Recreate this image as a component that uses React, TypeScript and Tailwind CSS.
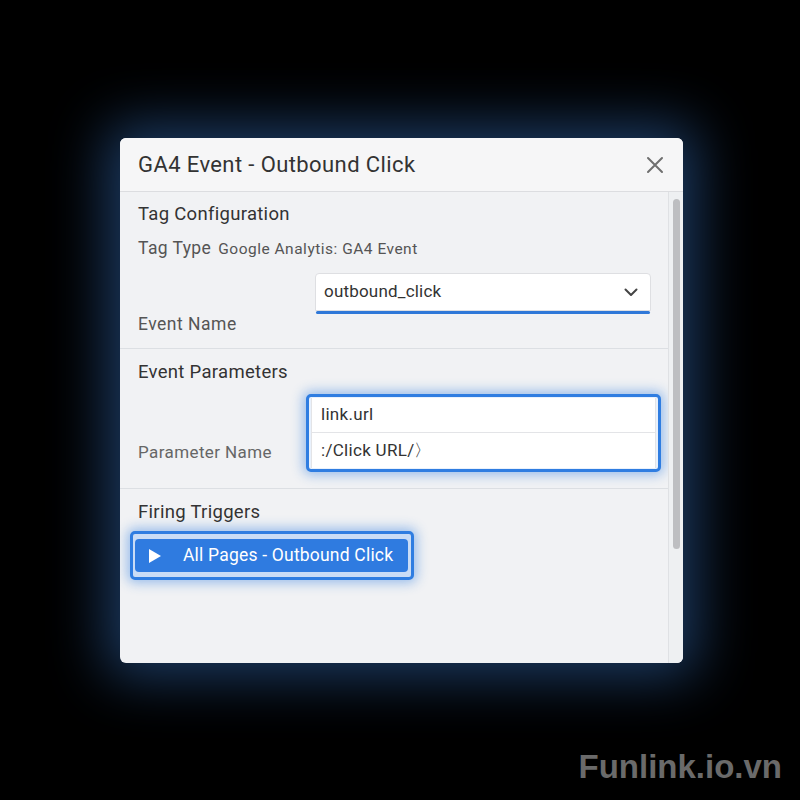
import React from "react";

const font = { fontFamily: "Roboto, 'Noto Sans', Arial, sans-serif" };

function CloseIcon() {
  return (
    <svg width="18" height="18" viewBox="0 0 18 18" fill="none">
      <path d="M2 2L16 16M16 2L2 16" stroke="#6f6f6f" strokeWidth="2" strokeLinecap="round" />
    </svg>
  );
}

function Chevron() {
  return (
    <svg width="14" height="9" viewBox="0 0 14 9" fill="none">
      <path d="M1.5 1.5L7 7L12.5 1.5" stroke="#444" strokeWidth="2" strokeLinecap="round" strokeLinejoin="round" />
    </svg>
  );
}

function Play() {
  return (
    <svg width="14" height="16" viewBox="0 0 14 16">
      <path d="M1 1L13 8L1 15Z" fill="#fff" />
    </svg>
  );
}

export default function App() {
  return (
    <div className="relative w-[800px] h-[800px] bg-black pt-[138px] pl-[120px]" style={font}>
      <div className="w-[563px] h-[525px] rounded-md overflow-hidden bg-[#f1f2f4] flex flex-col shadow-[0_0_55px_14px_rgba(45,95,160,0.62)]">
        {/* header */}
        <div className="h-[54px] shrink-0 bg-[#f6f6f7] border-b border-[#dcdde0] flex items-center justify-between pl-[18px] pr-[19px]">
          <span className="text-[22px] tracking-[0.4px] text-[#333]">GA4 Event - Outbound Click</span>
          <CloseIcon />
        </div>

        <div className="flex flex-1 min-h-0">
          <div className="flex-1 flex flex-col">
            {/* Tag Configuration */}
            <section className="pt-[11px] pb-[13px] border-b border-[#dcdfe3]">
              <h2 className="pl-[18px] text-[18.5px] tracking-[0.3px] leading-[22px] text-[#333]">Tag Configuration</h2>
              <div className="pl-[18px] mt-[12px] flex items-baseline gap-[7px] leading-[22px]">
                <span className="text-[17.5px] tracking-[0.4px] text-[#555]">Tag Type</span>
                <span className="text-[15.5px] tracking-[0.5px] text-[#555]">Google Analytis: GA4 Event</span>
              </div>
              <div className="ml-[195px] mr-[17px] mt-[13px]">
                <div className="h-[38px] bg-white border border-[#dedfe2] rounded-t-[4px] flex items-center justify-between pl-[8px] pr-[12px]">
                  <span className="text-[17px] tracking-[0.2px] text-[#333]">outbound_click</span>
                  <Chevron />
                </div>
                <div className="mx-px h-[3px] bg-[#2f78d8] rounded-sm" />
              </div>
              <div className="pl-[18px] mt-[-1px] text-[17.5px] tracking-[0.5px] leading-[22px] text-[#555]">Event Name</div>
            </section>

            {/* Event Parameters */}
            <section className="pt-[12px] pb-[16px] border-b border-[#dcdfe3]">
              <h2 className="pl-[18px] text-[18.5px] tracking-[0.3px] leading-[22px] text-[#333]">Event Parameters</h2>
              <div className="mt-[11px] flex items-end">
                <div className="w-[186px] shrink-0 pl-[18px] pb-[9px] text-[17px] tracking-[0.4px] leading-[22px] text-[#666]">Parameter Name</div>
                <div className="w-[355px] border-[3px] border-[#2f7de1] rounded-[5px] bg-[#e9f1fc] px-[2px] py-[1px] shadow-[0_0_12px_3px_rgba(47,125,225,0.45)]">
                  <div className="bg-white border-x border-[#e3e4e7]">
                    <div className="h-[35px] flex items-center pl-[9px] text-[17px] tracking-[0.3px] text-[#333] border-b border-[#e3e4e7]">link.url</div>
                    <div className="h-[35px] flex items-center pl-[9px] text-[17px] tracking-[0.3px] text-[#333]">:/Click URL/〉</div>
                  </div>
                </div>
              </div>
            </section>

            {/* Firing Triggers */}
            <section className="pt-[12px]">
              <h2 className="pl-[18px] text-[18.5px] tracking-[0.3px] leading-[22px] text-[#333]">Firing Triggers</h2>
              <div className="ml-[10px] mt-[8px] w-[284px] border-[3px] border-[#2f7de1] rounded-[5px] bg-[#c9dcf6] pl-[2px] pr-[3px] py-[5px] shadow-[0_0_12px_3px_rgba(47,125,225,0.45)]">
                <div className="h-[33px] bg-[#2f7be0] rounded-[4px] flex items-center gap-[21px] pl-[13px] text-white text-[17.5px] tracking-[0.2px]">
                  <Play />
                  <span>All Pages - Outbound Click</span>
                </div>
              </div>
            </section>
          </div>

          {/* scrollbar */}
          <div className="w-[15px] shrink-0 border-l border-[#dfe1e4] bg-[#eef0f2] flex justify-center pt-[7px]">
            <div className="w-[7px] h-[350px] rounded-sm bg-[#bdbec1]" />
          </div>
        </div>
      </div>

      <div className="absolute right-[18px] bottom-[9px] text-[33px] font-bold text-[#6a6a6a]" style={{ fontFamily: "'Liberation Sans', Arial, sans-serif" }}>
        Funlink.io.vn
      </div>
    </div>
  );
}
